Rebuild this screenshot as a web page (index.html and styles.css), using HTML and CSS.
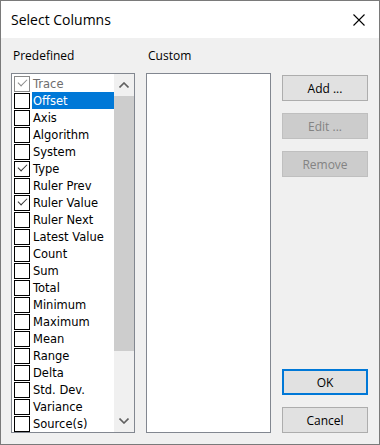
FILE: index.html
```html
<!DOCTYPE html>
<html lang="en">
<head>
    <meta charset="UTF-8">
    <title>Select Columns</title>
    <link rel="stylesheet" href="styles.css">
</head>
<body>
    <div class="dialog">
        <div class="titlebar">
            <span class="title">Select Columns</span>
            <svg class="close" width="12" height="12" viewBox="0 0 12 12">
                <path d="M0.5 0.5 L11.5 11.5 M11.5 0.5 L0.5 11.5" stroke="#000" stroke-width="1.1" fill="none"/>
            </svg>
        </div>
        <div class="content">
            <div class="col">
                <div class="label">Predefined</div>
                <div class="listbox">
                    <ul class="items">
                        <li class="item disabled checked"><span class="box"></span><span class="text">Trace</span></li>
                        <li class="item selected"><span class="box"></span><span class="text">Offset</span></li>
                        <li class="item"><span class="box"></span><span class="text">Axis</span></li>
                        <li class="item"><span class="box"></span><span class="text">Algorithm</span></li>
                        <li class="item"><span class="box"></span><span class="text">System</span></li>
                        <li class="item checked"><span class="box"></span><span class="text">Type</span></li>
                        <li class="item"><span class="box"></span><span class="text">Ruler Prev</span></li>
                        <li class="item checked"><span class="box"></span><span class="text">Ruler Value</span></li>
                        <li class="item"><span class="box"></span><span class="text">Ruler Next</span></li>
                        <li class="item"><span class="box"></span><span class="text">Latest Value</span></li>
                        <li class="item"><span class="box"></span><span class="text">Count</span></li>
                        <li class="item"><span class="box"></span><span class="text">Sum</span></li>
                        <li class="item"><span class="box"></span><span class="text">Total</span></li>
                        <li class="item"><span class="box"></span><span class="text">Minimum</span></li>
                        <li class="item"><span class="box"></span><span class="text">Maximum</span></li>
                        <li class="item"><span class="box"></span><span class="text">Mean</span></li>
                        <li class="item"><span class="box"></span><span class="text">Range</span></li>
                        <li class="item"><span class="box"></span><span class="text">Delta</span></li>
                        <li class="item"><span class="box"></span><span class="text">Std. Dev.</span></li>
                        <li class="item"><span class="box"></span><span class="text">Variance</span></li>
                        <li class="item"><span class="box"></span><span class="text">Source(s)</span></li>
                    </ul>
                    <div class="scrollbar">
                        <div class="arrow">
                            <svg width="10" height="6" viewBox="0 0 10 6"><path d="M0.5 5.5 L5 1 L9.5 5.5" stroke="#606060" stroke-width="1.6" fill="none"/></svg>
                        </div>
                        <div class="thumb"></div>
                        <div class="track"></div>
                        <div class="arrow">
                            <svg width="10" height="6" viewBox="0 0 10 6"><path d="M0.5 0.5 L5 5 L9.5 0.5" stroke="#606060" stroke-width="1.6" fill="none"/></svg>
                        </div>
                    </div>
                </div>
            </div>
            <div class="col">
                <div class="label">Custom</div>
                <div class="listbox"></div>
            </div>
            <div class="buttons">
                <button class="btn">Add ...</button>
                <button class="btn" disabled>Edit ...</button>
                <button class="btn" disabled>Remove</button>
                <button class="btn btn-default">OK</button>
                <button class="btn">Cancel</button>
            </div>
        </div>
    </div>
</body>
</html>
```

FILE: styles.css
```css
html, body {
    margin: 0;
    padding: 0;
}
body {
    width: 380px;
    height: 445px;
    background: #f0f0f0;
}
.dialog {
    width: 380px;
    height: 445px;
    box-sizing: border-box;
    border: 1px solid #7a7a7a;
    display: flex;
    flex-direction: column;
    background: #f0f0f0;
}
.titlebar {
    height: 37px;
    background: #fff;
    display: flex;
    align-items: center;
    justify-content: space-between;
    padding: 0 14px 0 10px;
}
.title {
    font-family: 'Open Sans', Arial, sans-serif;
    font-size: 14px;
    color: #000;
    margin-top: -1px;
}
.close {
    display: block;
}
.content {
    flex: 1;
    display: grid;
    grid-template-columns: 124px 125px 86px;
    column-gap: 11px;
    padding: 10px 11px 11px 10px;
}
.col {
    display: flex;
    flex-direction: column;
}
.label {
    font-family: 'Open Sans', Arial, sans-serif;
    font-size: 12px;
    line-height: 16px;
    height: 16px;
    margin: 0 0 9px 2px;
    color: #000;
}
.listbox {
    flex: 1;
    border: 1px solid #828790;
    background: #fff;
    display: flex;
    overflow: hidden;
}
.items {
    list-style: none;
    margin: 0;
    padding: 1px 0 0 0;
    flex: 1;
}
.item {
    height: 17px;
    display: flex;
    align-items: center;
    font-family: 'DejaVu Sans', Tahoma, sans-serif;
    font-size: 11.5px;
    color: #000;
}
.box {
    width: 14px;
    height: 14px;
    border: 1px solid #000;
    margin: 1px 2px 0 2px;
    flex: none;
    position: relative;
}
.checked .box::after {
    content: '';
    position: absolute;
    left: 3px;
    top: 2px;
    width: 8px;
    height: 4px;
    border-left: 1.3px solid #333;
    border-bottom: 1.3px solid #333;
    transform: rotate(-45deg);
}
.text {
    flex: 1;
    height: 17px;
    line-height: 19px;
    padding-left: 1px;
}
.selected .text {
    background: #0078d7;
    color: #fff;
}
.disabled {
    color: #6d6d6d;
}
.disabled .box {
    border-color: #8a8a8a;
}
.disabled .box::after {
    border-color: #8a8a8a;
}
.scrollbar {
    width: 20px;
    background: #f0f0f0;
    display: flex;
    flex-direction: column;
}
.arrow {
    height: 22px;
    display: flex;
    align-items: center;
    justify-content: center;
}
.arrow svg {
    display: block;
}
.thumb {
    height: 255px;
    background: #cdcdcd;
}
.track {
    flex: 1;
}
.buttons {
    display: flex;
    flex-direction: column;
    gap: 12px;
    padding-top: 27px;
}
.btn {
    height: 26px;
    box-sizing: border-box;
    background: #e1e1e1;
    border: 1px solid #adadad;
    font-family: 'Open Sans', Arial, sans-serif;
    font-size: 12px;
    color: #000;
    padding: 0;
    margin: 0;
}
.btn:disabled {
    background: #cccccc;
    border-color: #bfbfbf;
    color: #838383;
}
.btn-default {
    margin-top: auto;
    border: 2px solid #0078d7;
}
```
